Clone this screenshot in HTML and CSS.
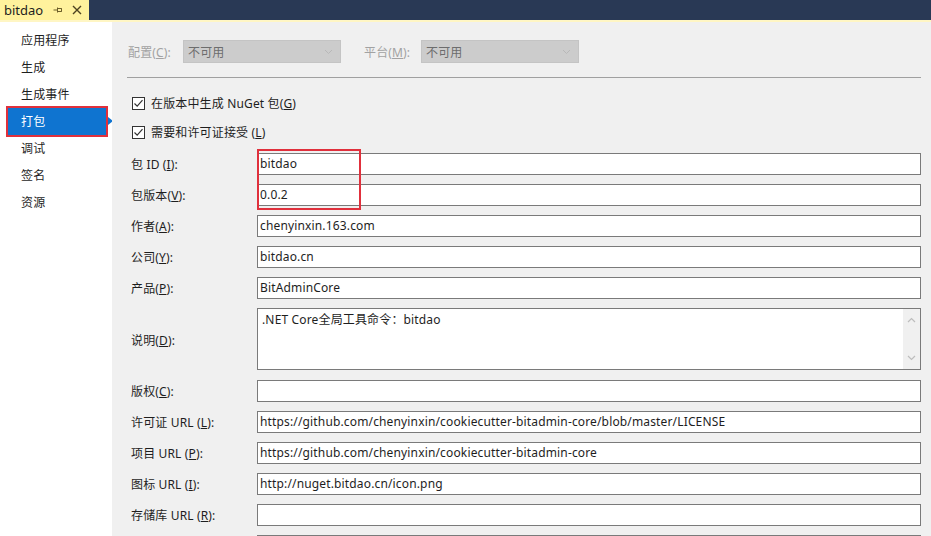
FILE: index.html
```html
<!DOCTYPE html>
<html lang="zh">
<head>
<meta charset="utf-8">
<title>bitdao</title>
<link rel="stylesheet" href="styles.css">
</head>
<body>
<div class="tabbar">
  <div class="tab">
    <span class="tab-title">bitdao</span>
    <svg class="pin" width="10" height="10" viewBox="0 0 10 10"><path d="M0.5 5H4.5M4.5 2.5V7.5M4.5 3.5H8.5V6.5H4.5M8.5 3.5V6.5" stroke="#6d5f2a" stroke-width="1" fill="none"/></svg>
    <svg class="close" width="10" height="10" viewBox="0 0 10 10"><path d="M1 1L9 9M9 1L1 9" stroke="#4d4320" stroke-width="1.4"/></svg>
  </div>
</div>
<div class="strip"></div>
<div class="main">
  <nav class="sidebar">
    <div class="nav-item">应用程序</div>
    <div class="nav-item">生成</div>
    <div class="nav-item">生成事件</div>
    <div class="nav-item active">打包<span class="arrow"></span></div>
    <div class="nav-item">调试</div>
    <div class="nav-item">签名</div>
    <div class="nav-item">资源</div>
  </nav>
  <section class="content">
    <div class="config-row">
      <span class="cfg-label">配置(<u>C</u>):</span>
      <div class="select"><span>不可用</span><svg width="9" height="6" viewBox="0 0 9 6"><path d="M1 1L4.5 4.5L8 1" stroke="#b8b8b8" fill="none"/></svg></div>
      <span class="cfg-label second">平台(<u>M</u>):</span>
      <div class="select"><span>不可用</span><svg width="9" height="6" viewBox="0 0 9 6"><path d="M1 1L4.5 4.5L8 1" stroke="#b8b8b8" fill="none"/></svg></div>
    </div>
    <div class="separator"></div>
    <div class="check-row first"><span class="checkbox"><svg width="11" height="11" viewBox="0 0 11 11"><path d="M1.5 5.5L4.2 8.2L9.5 2.2" stroke="#333" stroke-width="1.2" fill="none"/></svg></span>在版本中生成 NuGet 包(<u>G</u>)</div>
    <div class="check-row"><span class="checkbox"><svg width="11" height="11" viewBox="0 0 11 11"><path d="M1.5 5.5L4.2 8.2L9.5 2.2" stroke="#333" stroke-width="1.2" fill="none"/></svg></span>需要和许可证接受 (<u>L</u>)</div>
    <div class="form">
      <label>包 ID (<u>I</u>):</label><div class="input">bitdao</div>
      <label>包版本(<u>V</u>):</label><div class="input">0.0.2</div>
      <label>作者(<u>A</u>):</label><div class="input">chenyinxin.163.com</div>
      <label>公司(<u>Y</u>):</label><div class="input">bitdao.cn</div>
      <label>产品(<u>P</u>):</label><div class="input">BitAdminCore</div>
      <label>说明(<u>D</u>):</label>
      <div class="textarea">
        <div class="ta-text">.NET Core全局工具命令：bitdao</div>
        <div class="scrollbar">
          <svg width="9" height="6" viewBox="0 0 9 6"><path d="M1 5L4.5 1.5L8 5" stroke="#bdbdbd" stroke-width="1.2" fill="none"/></svg>
          <svg width="9" height="6" viewBox="0 0 9 6"><path d="M1 1L4.5 4.5L8 1" stroke="#bdbdbd" stroke-width="1.2" fill="none"/></svg>
        </div>
      </div>
      <label>版权(<u>C</u>):</label><div class="input"></div>
      <label>许可证 URL (<u>L</u>):</label><div class="input">https://github.com/chenyinxin/cookiecutter-bitadmin-core/blob/master/LICENSE</div>
      <label>项目 URL (<u>P</u>):</label><div class="input">https://github.com/chenyinxin/cookiecutter-bitadmin-core</div>
      <label>图标 URL (<u>I</u>):</label><div class="input">http://nuget.bitdao.cn/icon.png</div>
      <label>存储库 URL (<u>R</u>):</label><div class="input"></div>
      <label></label><div class="input"></div>
    </div>
    <div class="highlight"></div>
  </section>
</div>
</body>
</html>
```

FILE: styles.css
```css
html, body {
  margin: 0;
  padding: 0;
  width: 931px;
  height: 536px;
  overflow: hidden;
  font-family: "Segoe UI", "Noto Sans", "Noto Sans CJK SC", sans-serif;
  font-size: 12px;
  letter-spacing: 0.15px;
  color: #1e1e1e;
}

u { text-decoration: underline; text-underline-offset: 1px; }

.tabbar {
  height: 20px;
  background: #293955;
  display: flex;
}

.tab {
  width: 89px;
  height: 20px;
  background: #fff29d;
  display: flex;
  align-items: center;
  box-sizing: border-box;
  padding-left: 4px;
}

.tab-title {
  font-size: 13px;
  color: #1e1e1e;
  line-height: 20px;
  letter-spacing: 0;
}

.pin { margin-left: 10px; }
.close { margin-left: 9px; }

.strip {
  height: 2px;
  background: #fff6c4;
}

.main {
  display: flex;
  height: 514px;
}

.sidebar {
  width: 112px;
  flex: none;
  background: #ffffff;
  padding-top: 5px;
  box-sizing: border-box;
}

.nav-item {
  height: 27px;
  line-height: 27px;
  padding-left: 21px;
  position: relative;
}

.nav-item.active {
  margin-left: 8px;
  width: 98px;
  padding-left: 13px;
  box-sizing: border-box;
  background: #0f74d0;
  color: #ffffff;
  box-shadow: 0 0 0 2px #e0303c;
}

.arrow {
  position: absolute;
  right: -7px;
  top: 9px;
  width: 0;
  height: 0;
  border-top: 4px solid transparent;
  border-bottom: 4px solid transparent;
  border-left: 5px solid #0f74d0;
}

.content {
  flex: 1;
  background: #f0f0f0;
  padding: 18px 10px 0 16px;
  position: relative;
}

.config-row {
  display: flex;
  align-items: center;
  height: 23px;
}

.cfg-label {
  color: #a2a2a2;
  width: 55px;
}

.cfg-label.second {
  margin-left: 23px;
  width: 57px;
}

.select {
  width: 158px;
  height: 23px;
  box-sizing: border-box;
  background: #cccccc;
  border: 1px solid #c4c4c4;
  display: flex;
  align-items: center;
  justify-content: space-between;
  padding: 0 7px 0 4px;
  color: #6d6d6d;
}

.separator {
  margin-top: 14px;
  height: 1px;
  background: #a0a0a0;
  margin-left: -1px;
}

.check-row {
  height: 20px;
  display: flex;
  align-items: center;
  margin-top: 9px;
  padding-left: 4px;
}

.check-row.first { margin-top: 15px; }

.checkbox {
  width: 13px;
  height: 13px;
  box-sizing: border-box;
  border: 1px solid #333333;
  background: #ffffff;
  display: flex;
  align-items: center;
  justify-content: center;
  margin-right: 6px;
}

.form {
  margin-top: 11px;
  display: grid;
  grid-template-columns: 129px 1fr;
  row-gap: 9px;
  align-items: center;
}

.form label {
  padding-left: 3px;
}

.input {
  height: 22px;
  box-sizing: border-box;
  background: #ffffff;
  border: 1px solid #7a7a7a;
  padding-left: 2px;
  line-height: 20px;
  white-space: nowrap;
  overflow: hidden;
}

.textarea {
  height: 62px;
  box-sizing: border-box;
  background: #ffffff;
  border: 1px solid #7a7a7a;
  display: flex;
  justify-content: space-between;
  margin-bottom: 1px;
}

.ta-text {
  padding: 3px 0 0 4px;
  line-height: 16px;
}

.scrollbar {
  width: 17px;
  background: #f0f0f0;
  display: flex;
  flex-direction: column;
  justify-content: space-between;
  align-items: center;
  padding: 8px 0 8px;
  box-sizing: border-box;
}

.highlight {
  position: absolute;
  left: 145px;
  top: 127px;
  width: 104px;
  height: 61px;
  box-sizing: border-box;
  border: 2px solid #e0303c;
}
```
